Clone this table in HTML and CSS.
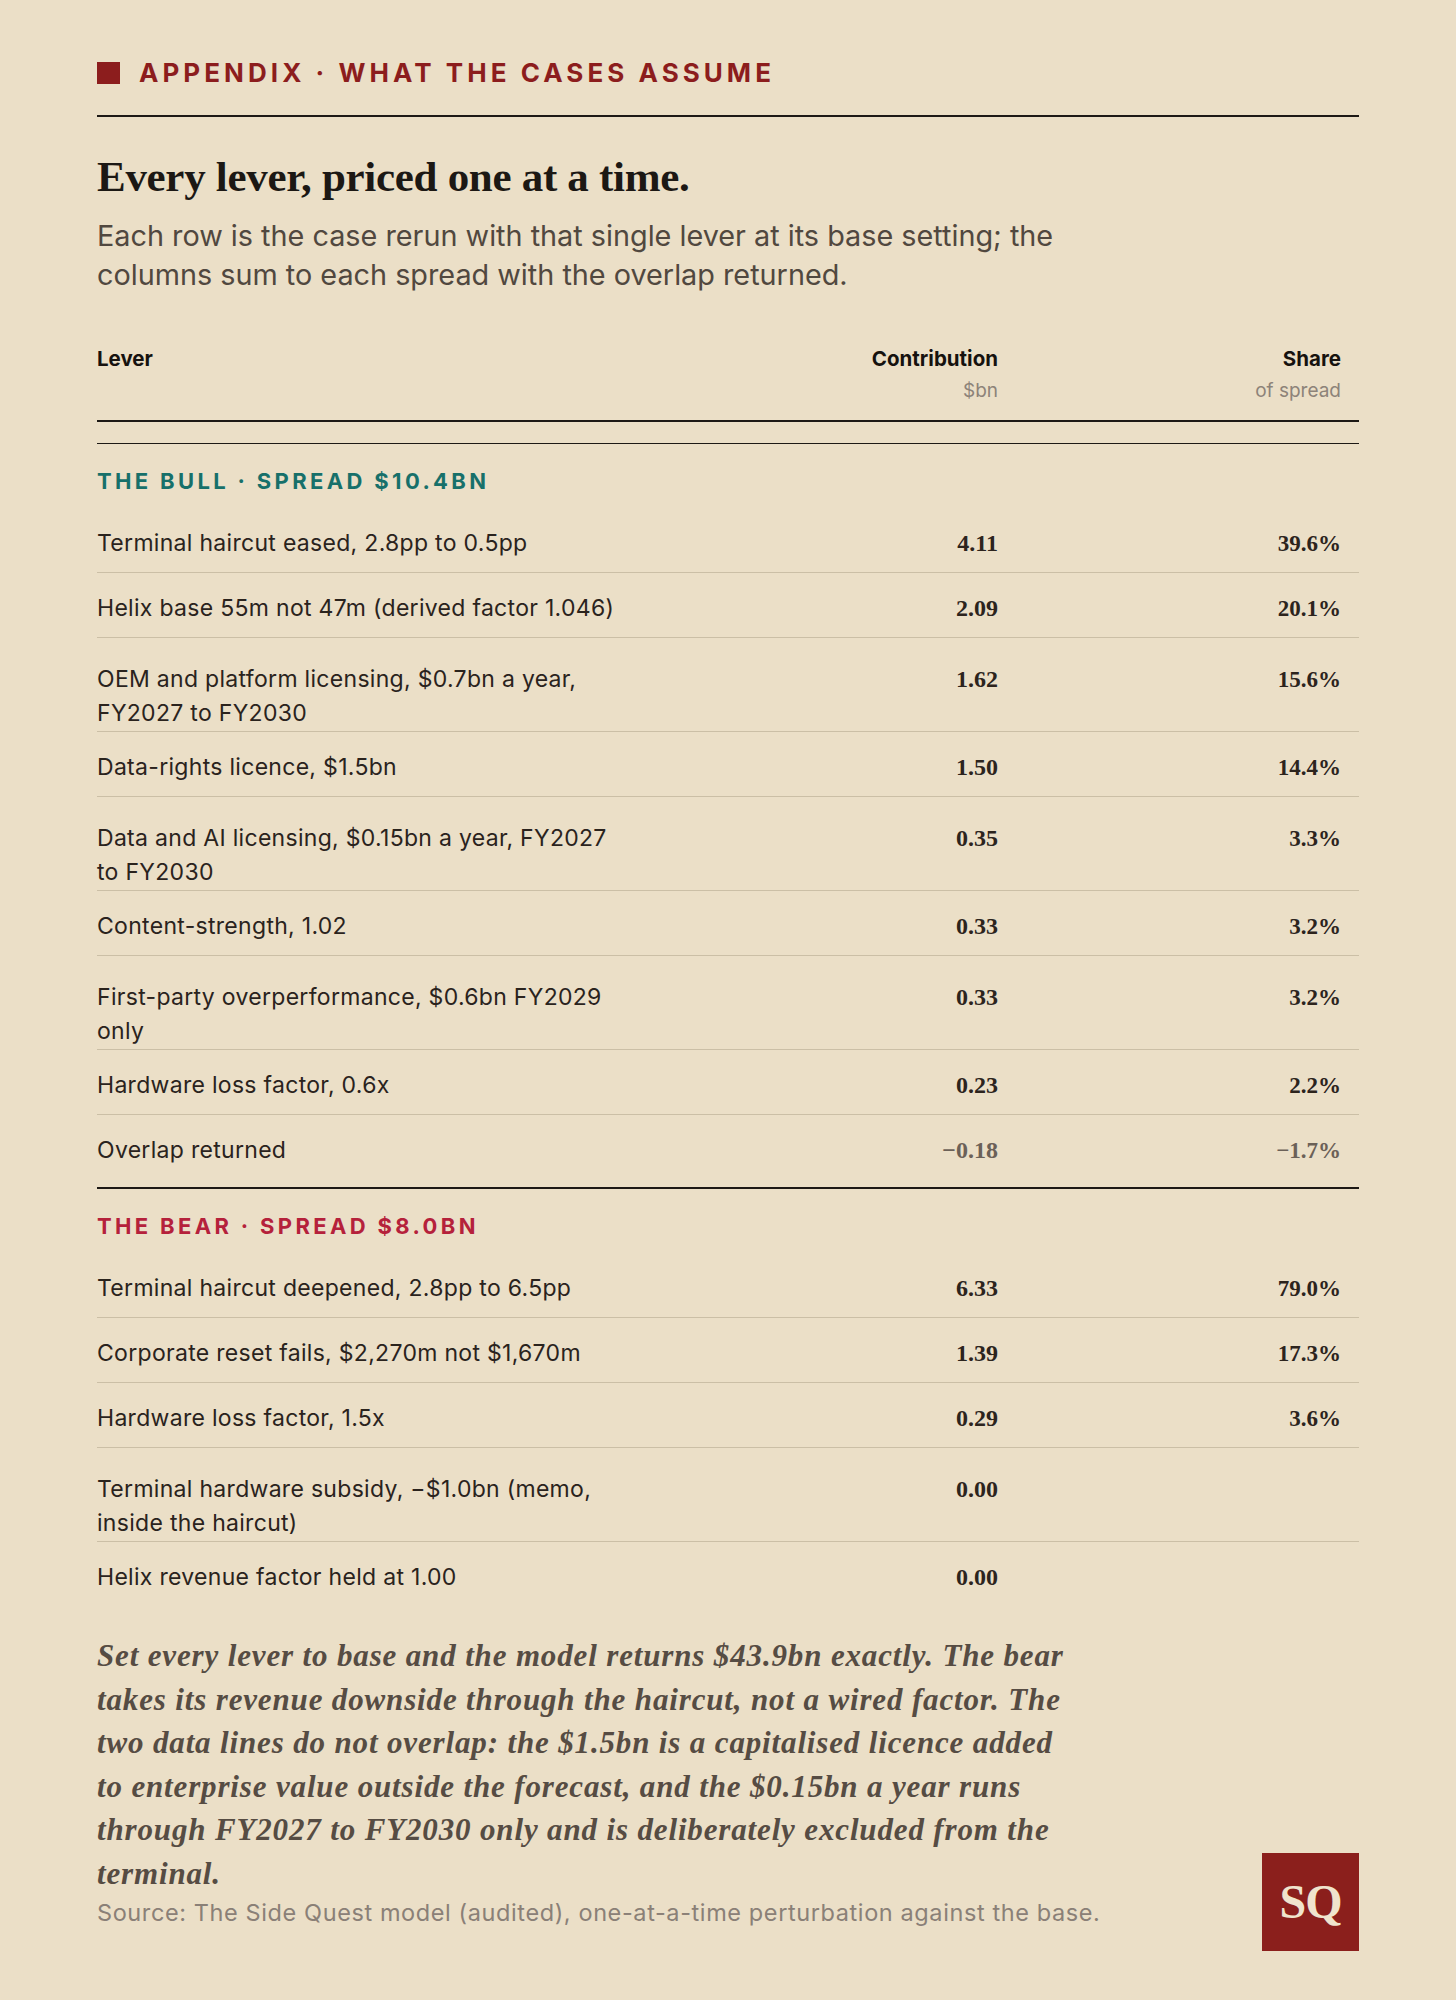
FILE: index.html
```html
<!DOCTYPE html>
<html lang="en">
<head>
<meta charset="utf-8">
<title>Appendix · What the cases assume</title>
<link rel="stylesheet" href="styles.css">
</head>
<body>
<main class="page">
  <header class="kicker-bar">
    <span class="kicker-mark"></span>
    <span class="kicker">APPENDIX · WHAT THE CASES ASSUME</span>
  </header>

  <h1 class="title">Every lever, priced one at a time.</h1>
  <p class="dek">Each row is the case rerun with that single lever at its base setting; the columns sum to each spread with the overlap returned.</p>

  <div class="thead">
    <div class="th">Lever</div>
    <div class="th num">Contribution<span class="sub">$bn</span></div>
    <div class="th num">Share<span class="sub">of spread</span></div>
  </div>

  <section class="case bull">
    <h2 class="case-label">THE BULL · SPREAD $10.4BN</h2>
    <div class="row"><div class="lever">Terminal haircut eased, 2.8pp to 0.5pp</div><div class="val">4.11</div><div class="pct">39.6%</div></div>
    <div class="row"><div class="lever">Helix base 55m not 47m (derived factor 1.046)</div><div class="val">2.09</div><div class="pct">20.1%</div></div>
    <div class="row tall"><div class="lever">OEM and platform licensing, $0.7bn a year, FY2027 to FY2030</div><div class="val">1.62</div><div class="pct">15.6%</div></div>
    <div class="row"><div class="lever">Data-rights licence, $1.5bn</div><div class="val">1.50</div><div class="pct">14.4%</div></div>
    <div class="row tall"><div class="lever">Data and AI licensing, $0.15bn a year, FY2027 to FY2030</div><div class="val">0.35</div><div class="pct">3.3%</div></div>
    <div class="row"><div class="lever">Content-strength, 1.02</div><div class="val">0.33</div><div class="pct">3.2%</div></div>
    <div class="row tall"><div class="lever">First-party overperformance, $0.6bn FY2029 only</div><div class="val">0.33</div><div class="pct">3.2%</div></div>
    <div class="row"><div class="lever">Hardware loss factor, 0.6x</div><div class="val">0.23</div><div class="pct">2.2%</div></div>
    <div class="row muted"><div class="lever">Overlap returned</div><div class="val">−0.18</div><div class="pct">−1.7%</div></div>
  </section>

  <section class="case bear">
    <h2 class="case-label">THE BEAR · SPREAD $8.0BN</h2>
    <div class="row"><div class="lever">Terminal haircut deepened, 2.8pp to 6.5pp</div><div class="val">6.33</div><div class="pct">79.0%</div></div>
    <div class="row"><div class="lever">Corporate reset fails, $2,270m not $1,670m</div><div class="val">1.39</div><div class="pct">17.3%</div></div>
    <div class="row"><div class="lever">Hardware loss factor, 1.5x</div><div class="val">0.29</div><div class="pct">3.6%</div></div>
    <div class="row tall"><div class="lever">Terminal hardware subsidy, −$1.0bn (memo, inside the haircut)</div><div class="val">0.00</div><div class="pct"></div></div>
    <div class="row"><div class="lever">Helix revenue factor held at 1.00</div><div class="val">0.00</div><div class="pct"></div></div>
  </section>

  <footer class="foot">
    <div class="foot-text">
      <p class="note">Set every lever to base and the model returns $43.9bn exactly. The bear takes its revenue downside through the haircut, not a wired factor. The two data lines do not overlap: the $1.5bn is a capitalised licence added to enterprise value outside the forecast, and the $0.15bn a year runs through FY2027 to FY2030 only and is deliberately excluded from the terminal.</p>
      <p class="source">Source: The Side Quest model (audited), one-at-a-time perturbation against the base.</p>
    </div>
    <div class="logo">SQ</div>
  </footer>
</main>
</body>
</html>
```

FILE: styles.css
```css
* { box-sizing: border-box; }

html, body {
  margin: 0;
  padding: 0;
  background: #ebdfc7;
}

body {
  font-family: Inter, "Liberation Sans", sans-serif;
  color: #2a231d;
}

.page {
  width: 1456px;
  padding: 57px 97px 49px;
}

/* kicker */
.kicker-bar {
  display: flex;
  align-items: center;
  gap: 19px;
  padding-bottom: 27px;
  border-bottom: 2px solid #1d1915;
}
.kicker-mark {
  width: 23px;
  height: 22px;
  background: #8c1d1d;
}
.kicker {
  font-size: 26px;
  line-height: 31px;
  font-weight: 700;
  letter-spacing: 4.05px;
  color: #8c1d1d;
}

/* title */
.title {
  margin: 35px 0 0;
  font-family: "Liberation Serif", serif;
  font-weight: 700;
  font-size: 43px;
  line-height: 50px;
  letter-spacing: -0.3px;
  color: #1c1814;
}
.dek {
  margin: 14px 0 0;
  max-width: 1000px;
  font-size: 28.8px;
  line-height: 39px;
  color: #51483f;
}

/* table header */
.thead {
  margin-top: 53px;
  display: grid;
  grid-template-columns: 1fr 240px 343px;
  padding: 0 18px 16px 0;
  border-bottom: 2px solid #1d1915;
}
.th {
  font-size: 20.5px;
  line-height: 24px;
  font-weight: 700;
  color: #16120f;
}
.num { text-align: right; }
.sub {
  display: block;
  margin-top: 7px;
  font-size: 19px;
  line-height: 26px;
  font-weight: 400;
  color: #8d8379;
}

/* case sections */
.case {
  padding-bottom: 8px;
}
.bull {
  margin-top: 21px;
  border-top: 1.5px solid #1d1915;
}
.bear {
  border-top: 2px solid #1d1915;
}
.case-label {
  margin: 0 0 14px;
  padding-top: 25px;
  font-size: 22px;
  line-height: 25px;
  font-weight: 700;
  letter-spacing: 3.35px;
}
.bull .case-label { color: #17706a; }
.bear .case-label { color: #b5213b; }

.row {
  display: grid;
  grid-template-columns: 1fr 240px 343px;
  align-items: baseline;
  padding: 18px 18px 11px 0;
  border-bottom: 1px solid #cbbfa6;
}
.row.tall {
  padding-top: 24px;
  padding-bottom: 1px;
}
.row:last-child { border-bottom: none; }

.lever {
  max-width: 525px;
  font-size: 23px;
  line-height: 34px;
  letter-spacing: 0.3px;
  color: #2a231d;
}
.val, .pct {
  text-align: right;
  font-family: "Liberation Serif", serif;
  font-weight: 700;
  line-height: 34px;
  color: #2c241d;
}
.val { font-size: 24px; }
.pct { font-size: 23px; }
.row.muted .val, .row.muted .pct { color: #6b6158; }

/* footer */
.foot {
  margin-top: 21px;
  display: flex;
  justify-content: space-between;
  align-items: flex-end;
}
.foot-text {
  padding-bottom: 23px;
}
.note {
  margin: 0;
  max-width: 980px;
  font-family: "Liberation Serif", serif;
  font-style: italic;
  font-weight: 700;
  font-size: 31px;
  line-height: 43.6px;
  letter-spacing: 0.85px;
  color: #564c43;
}
.source {
  margin: 2px 0 0;
  font-size: 23.5px;
  line-height: 30px;
  letter-spacing: 0.6px;
  color: #8a8077;
}
.logo {
  width: 97px;
  height: 98px;
  display: flex;
  align-items: center;
  justify-content: center;
  background: #8b1f1c;
  color: #f0e4cd;
  font-family: "Liberation Serif", serif;
  font-weight: 700;
  font-size: 48px;
  letter-spacing: -1px;
}
```
